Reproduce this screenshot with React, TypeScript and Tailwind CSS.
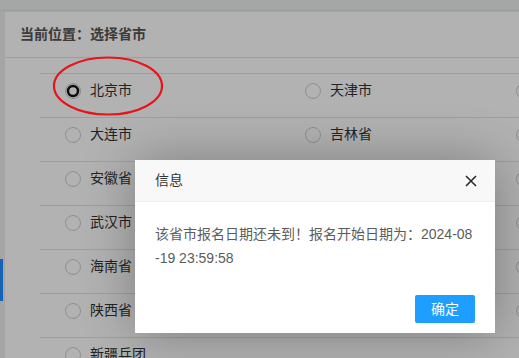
import React from "react";

const rows: [string, string, string][] = [
  ["北京市", "天津市", "河北省"],
  ["大连市", "吉林省", "黑龙江省"],
  ["安徽省", "福建省", "江西省"],
  ["武汉市", "湖南省", "广东省"],
  ["海南省", "四川省", "云南省"],
  ["陕西省", "甘肃省", "青海省"],
  ["新疆兵团", "", ""],
];

const Radio = ({ checked }: { checked?: boolean }) =>
  checked ? (
    <svg width="16" height="16" viewBox="0 0 16 16" className="shrink-0">
      <circle cx="8" cy="8" r="7.5" fill="#ffffff" stroke="#c4c4c4" strokeWidth="1" />
      <circle cx="8" cy="8" r="5" fill="#ffffff" stroke="#111111" strokeWidth="2.5" />
    </svg>
  ) : (
    <span className="block w-[16px] h-[16px] shrink-0 rounded-full border border-[#cdcdcd] bg-white" />
  );

const Cell = ({ label, checked }: { label: string; checked?: boolean }) => (
  <div className="flex items-center gap-[9px] pl-[25px] pb-[10px] h-full">
    {label && <Radio checked={checked} />}
    <span className="text-[14px] text-[#333] whitespace-nowrap">{label}</span>
  </div>
);

export default function App() {
  return (
    <div
      className="relative w-[519px] h-[358px] overflow-hidden bg-[#edf0ee]"
      style={{ fontFamily: '"Liberation Sans", "Noto Sans CJK SC", sans-serif' }}
    >
      {/* page under the shade */}
      <div className="flex flex-col h-full">
        <div className="h-[9px] shrink-0" />
        <div className="h-[3px] shrink-0 bg-[#e3e9e6]" />
        <div className="flex flex-1">
          <div className="w-[5px] shrink-0 bg-[#ececec]">
            <div className="mt-[247px] w-[3px] h-[42px] bg-[#1f8fff]" />
          </div>
          <div className="flex-1 bg-white">
            <div className="h-[46px] flex items-center px-[15px] border-b border-[#e3e3e3]">
              <span className="text-[14px] font-bold text-[#555]">当前位置：选择省市</span>
            </div>
            <div className="pl-[35px] pt-[15px]">
              {rows.map((r, i) => (
                <div
                  key={i}
                  className="grid grid-cols-[240px_211px_1fr] h-[44px] border-t border-[#e3e3e3]"
                >
                  <Cell label={r[0]} checked={i === 0} />
                  <Cell label={r[1]} />
                  <Cell label={r[2]} />
                </div>
              ))}
            </div>
          </div>
        </div>
      </div>

      {/* shade */}
      <div className="absolute inset-0 bg-black/30" />

      {/* dialog */}
      <div className="absolute left-[135px] top-[160px] w-[360px] bg-white shadow-[1px_1px_50px_rgba(0,0,0,0.3)]">
        <div className="h-[42px] flex items-center justify-between pl-[20px] pr-[18px] bg-[#f8f8f8] border-b border-[#eeeeee]">
          <span className="text-[14px] text-[#333]">信息</span>
          <svg width="12" height="12" viewBox="0 0 12 12">
            <path d="M1 1L11 11M11 1L1 11" stroke="#2b2b2b" strokeWidth="1.6" />
          </svg>
        </div>
        <div className="p-[20px] text-[14px] leading-[24px] text-[#5c5c5c]">
          <div className="whitespace-nowrap">该省市报名日期还未到！报名开始日期为：2024-08</div>
          <div>-19 23:59:58</div>
        </div>
        <div className="flex justify-end px-[20px] pt-[5px] pb-[10px]">
          <button className="w-[60px] h-[28px] rounded-[2px] bg-[#1e9fff] text-white text-[14px]">
            确定
          </button>
        </div>
      </div>

      {/* red annotation ring */}
      <svg className="absolute left-0 top-0 pointer-events-none" width="519" height="358">
        <ellipse cx="108" cy="86" rx="54" ry="28.5" fill="none" stroke="#e8141c" strokeWidth="2.2" />
      </svg>
    </div>
  );
}
